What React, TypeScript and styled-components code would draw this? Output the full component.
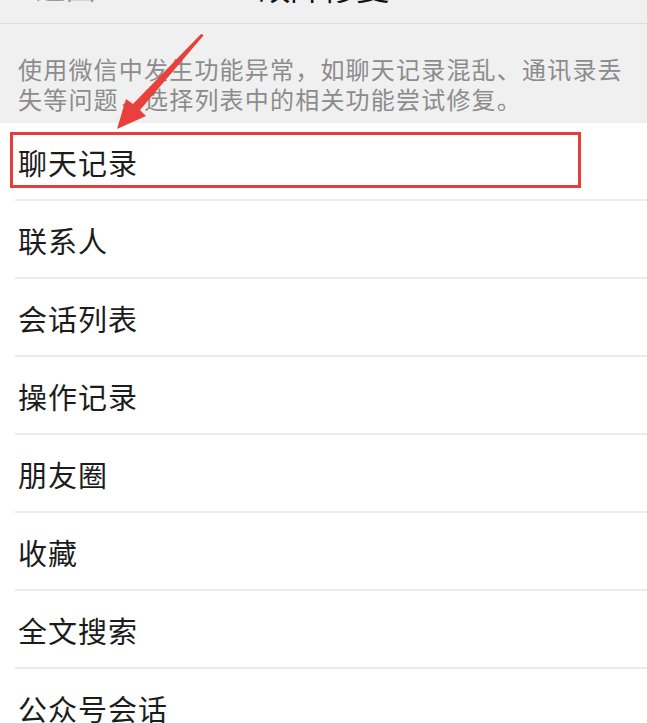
import React from "react";
import styled, { createGlobalStyle } from "styled-components";

const Global = createGlobalStyle`
  html, body { margin: 0; padding: 0; background: #ffffff; }
  body { font-family: "Noto Sans CJK SC", "Noto Sans", sans-serif; }
`;

const Page = styled.div`
  position: relative;
  width: 647px;
  height: 723px;
  overflow: hidden;
  background: #f0f0f0;
  display: flex;
  flex-direction: column;
`;

const NavBar = styled.div`
  flex: none;
  height: 70px;
  margin-top: -46px;
  padding-bottom: 6px;
  box-sizing: border-box;
  border-bottom: 1px solid #dcdcdc;
  background: #f0f0f0;
  display: grid;
  grid-template-columns: 1fr auto 1fr;
  align-items: center;
  padding-left: 18px;
  padding-right: 18px;
`;

const Back = styled.div`
  display: flex;
  align-items: center;
  gap: 8px;
  font-size: 32px;
  color: #111;
`;

const BackLabel = styled.span`
  color: #9a9a9a;
  font-size: 30px;
`;

const Title = styled.div`
  font-size: 33px;
  color: #111;
`;

const Description = styled.p`
  margin: 0;
  padding: 30px 18px 9px 18px;
  font-size: 24px;
  line-height: 30px;
  letter-spacing: 1.2px;
  color: #8c8c8c;
`;

const List = styled.ul`
  list-style: none;
  margin: 0;
  padding: 0;
  background: #ffffff;
  flex: 1;
`;

const Row = styled.li`
  height: 78px;
  box-sizing: border-box;
  display: flex;
  align-items: center;
  padding-left: 18px;
  font-size: 29px;
  letter-spacing: 1px;
  color: #1c1c1c;
  position: relative;
  &:not(:last-child)::after {
    content: "";
    position: absolute;
    left: 15px;
    right: 0;
    bottom: 0;
    height: 2px;
    background: #ebebeb;
  }
`;

const Highlight = styled.div`
  position: absolute;
  left: 10px;
  top: 132px;
  width: 571px;
  height: 56px;
  box-sizing: border-box;
  border: 3px solid #e53e3e;
  pointer-events: none;
`;

const ArrowLayer = styled.svg`
  position: absolute;
  left: 0;
  top: 0;
  pointer-events: none;
`;

const items = [
  "聊天记录",
  "联系人",
  "会话列表",
  "操作记录",
  "朋友圈",
  "收藏",
  "全文搜索",
  "公众号会话",
];

export default function App() {
  return (
    <>
      <Global />
      <Page>
        <NavBar>
          <Back>
            <span>‹</span>
            <BackLabel>返回</BackLabel>
          </Back>
          <Title>故障修复</Title>
          <div />
        </NavBar>
        <Description>
          使用微信中发生功能异常，如聊天记录混乱、通讯录丢失等问题，选择列表中的相关功能尝试修复。
        </Description>
        <List>
          {items.map((t) => (
            <Row key={t}>{t}</Row>
          ))}
        </List>
        <Highlight />
        <ArrowLayer width="647" height="723" viewBox="0 0 647 723">
          <path
            d="M202.5 34.5 L203.5 35.5 L140 110 L146 116 L117 129 L126 99 L133 104 L201 34 Z"
            fill="#e8403d"
          />
        </ArrowLayer>
      </Page>
    </>
  );
}
